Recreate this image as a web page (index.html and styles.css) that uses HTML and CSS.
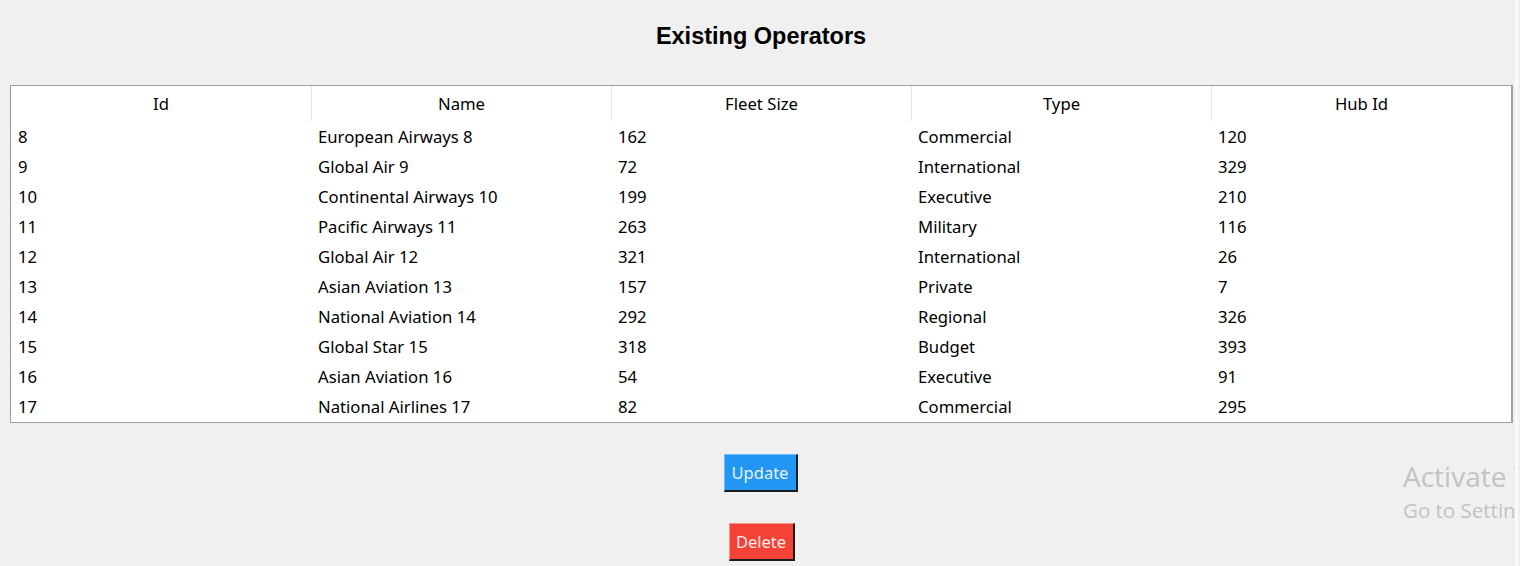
FILE: index.html
```html
<!DOCTYPE html>
<html>
<head>
<meta charset="utf-8">
<title>Existing Operators</title>
<link rel="stylesheet" href="styles.css">
</head>
<body>
<div class="app">
  <main class="main">
    <h1 class="title">Existing Operators</h1>
    <div class="tree">
      <div class="row head">
        <div class="hcell">Id</div>
        <div class="hcell sep">Name</div>
        <div class="hcell sep">Fleet Size</div>
        <div class="hcell sep">Type</div>
        <div class="hcell sep">Hub Id</div>
      </div>
      <div class="row"><div class="cell">8</div><div class="cell">European Airways 8</div><div class="cell">162</div><div class="cell">Commercial</div><div class="cell">120</div></div>
      <div class="row"><div class="cell">9</div><div class="cell">Global Air 9</div><div class="cell">72</div><div class="cell">International</div><div class="cell">329</div></div>
      <div class="row"><div class="cell">10</div><div class="cell">Continental Airways 10</div><div class="cell">199</div><div class="cell">Executive</div><div class="cell">210</div></div>
      <div class="row"><div class="cell">11</div><div class="cell">Pacific Airways 11</div><div class="cell">263</div><div class="cell">Military</div><div class="cell">116</div></div>
      <div class="row"><div class="cell">12</div><div class="cell">Global Air 12</div><div class="cell">321</div><div class="cell">International</div><div class="cell">26</div></div>
      <div class="row"><div class="cell">13</div><div class="cell">Asian Aviation 13</div><div class="cell">157</div><div class="cell">Private</div><div class="cell">7</div></div>
      <div class="row"><div class="cell">14</div><div class="cell">National Aviation 14</div><div class="cell">292</div><div class="cell">Regional</div><div class="cell">326</div></div>
      <div class="row"><div class="cell">15</div><div class="cell">Global Star 15</div><div class="cell">318</div><div class="cell">Budget</div><div class="cell">393</div></div>
      <div class="row"><div class="cell">16</div><div class="cell">Asian Aviation 16</div><div class="cell">54</div><div class="cell">Executive</div><div class="cell">91</div></div>
      <div class="row"><div class="cell">17</div><div class="cell">National Airlines 17</div><div class="cell">82</div><div class="cell">Commercial</div><div class="cell">295</div></div>
    </div>
    <div class="actions">
      <button class="btn btn-update">Update</button>
      <button class="btn btn-delete">Delete</button>
    </div>
    <div class="watermark">
      <div class="wm-big">Activate Windows</div>
      <div class="wm-small">Go to Settings to activate Windows.</div>
    </div>
  </main>
  <div class="edge"></div>
  <div class="outside"></div>
</div>
</body>
</html>
```

FILE: styles.css
```css
html, body {
  margin: 0;
  padding: 0;
  background: #f0f0f0;
}
body {
  width: 1520px;
  height: 566px;
  overflow: hidden;
}
.app {
  display: flex;
  height: 566px;
}
.main {
  position: relative;
  width: 1515px;
  height: 566px;
  overflow: hidden;
  display: flex;
  flex-direction: column;
  flex: none;
}
.edge {
  width: 3px;
  background: #fafafa;
  flex: none;
}
.outside {
  flex: 1;
  background: #f0f0f0;
}
.title {
  margin: 22px 0 0 0;
  height: 28px;
  width: 1522px;
  text-align: center;
  font-family: "Liberation Sans", Arial, sans-serif;
  font-weight: bold;
  font-size: 23.5px;
  line-height: 28px;
  color: #000;
}
.tree {
  margin: 35px 0 0 10px;
  width: 1500px;
  border: 1px solid #a0a0a0;
  border-right: 2px solid #a0a0a0;
  background: #fff;
  font-family: "Noto Sans", "Open Sans", sans-serif;
  font-size: 16.7px;
  color: #000;
}
.row {
  display: grid;
  grid-template-columns: 300px 300px 300px 300px 300px;
  height: 30px;
}
.row.head {
  height: 36px;
}
.hcell {
  text-align: center;
  line-height: 36px;
  height: 35px;
  white-space: nowrap;
}
.hcell.sep {
  border-left: 1px solid #e5e5e5;
}
.cell {
  padding-left: 7px;
  line-height: 30px;
  white-space: nowrap;
}
.actions {
  display: flex;
  flex-direction: column;
  align-items: center;
  width: 1522px;
  margin-top: 31px;
  gap: 31px;
}
.btn {
  display: block;
  height: 38px;
  padding: 0;
  margin: 0;
  font-family: "Noto Sans", "Open Sans", sans-serif;
  font-size: 16.5px;
  line-height: 34px;
  text-align: center;
  border-style: solid;
  border-width: 1px 2px 2px 1px;
  box-sizing: border-box;
  cursor: pointer;
}
.btn-update {
  width: 74px;
  margin-left: -1px;
  background: #2196f3;
  color: #e8f4fd;
  border-color: #6cbcf7 #1b1b1b #1b1b1b #6cbcf7;
}
.btn-delete {
  width: 66px;
  margin-left: 1px;
  background: #f44336;
  color: #fde9e7;
  border-color: #f8948c #1b1b1b #1b1b1b #f8948c;
}
.watermark {
  position: absolute;
  left: 1403px;
  top: 457px;
  color: #c3c3c3;
  font-family: "Open Sans", "Noto Sans", sans-serif;
  white-space: nowrap;
}
.wm-big {
  font-size: 28px;
  line-height: 39px;
}
.wm-small {
  font-size: 20.5px;
  line-height: 28px;
}
```
